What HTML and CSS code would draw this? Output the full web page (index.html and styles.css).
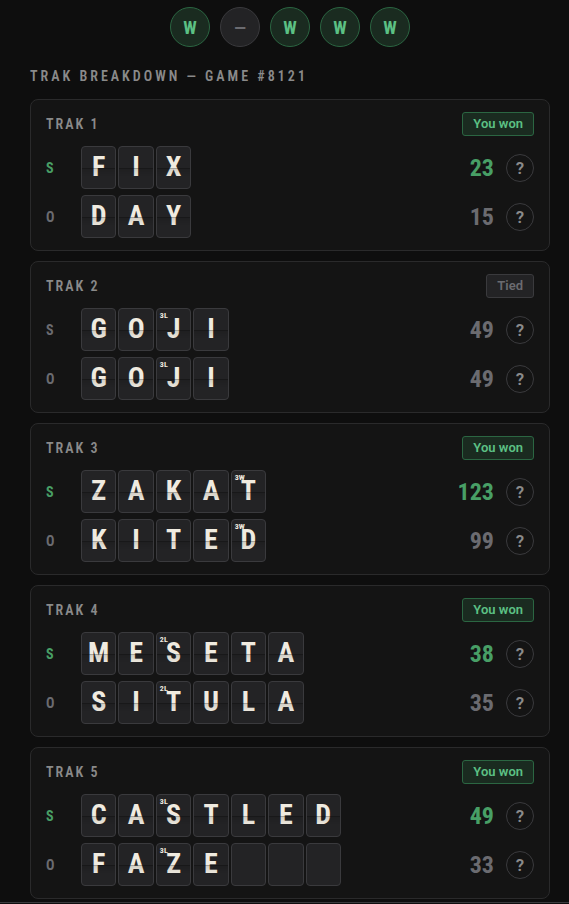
FILE: index.html
```html
<!DOCTYPE html>
<html lang="en">
<head>
  <meta charset="UTF-8">
  <meta name="viewport" content="width=device-width, initial-scale=1.0">
  <title>Trak Breakdown</title>
  <link rel="stylesheet" href="styles.css">
</head>
<body>
  <main class="container">
    <div class="results">
      <span class="result win">W</span>
      <span class="result">—</span>
      <span class="result win">W</span>
      <span class="result win">W</span>
      <span class="result win">W</span>
    </div>
    <h2 class="title">TRAK BREAKDOWN — GAME #8121</h2>
    <div class="traks" id="traks"></div>
  </main>
  <footer class="bottom-bar"></footer>
  <script src="script.js"></script>
</body>
</html>
```

FILE: styles.css
```css
*{
  box-sizing: border-box;
}
body{
  margin: 0;
  height: 100vh;
  overflow: hidden;
  display: flex;
  flex-direction: column;
  background-color: #0e0e0e;
  color: #8a8a8a;
  font-family: "Roboto Condensed", "Liberation Sans Narrow", Roboto, sans-serif;
}
.container{
  flex: 1;
  min-height: 0;
  overflow: hidden;
  padding: 7px 19px 0 30px;
}
.results{
  display: flex;
  justify-content: center;
  gap: 10px;
}
.result{
  display: flex;
  align-items: center;
  justify-content: center;
  width: 40px;
  height: 40px;
  border: 1px solid #3a3a3d;
  border-radius: 50%;
  background-color: #232325;
  color: #6b6b70;
  font-size: 18px;
  font-weight: 700;
}
.result.win{
  border-color: #2b6642;
  background-color: #1a2b20;
  color: #5cc084;
}
.title{
  margin: 20px 0 14px;
  font-size: 14px;
  line-height: 18px;
  font-weight: 600;
  letter-spacing: 3px;
}
.traks{
  display: flex;
  flex-direction: column;
  gap: 10px;
}
.trak{
  padding: 12px 15px;
  border: 1px solid #2a2a2b;
  border-radius: 8px;
  background-color: #141414;
}
.trak-head{
  display: flex;
  align-items: center;
  justify-content: space-between;
  margin-bottom: 10px;
}
.trak-name{
  margin: 0;
  font-size: 14px;
  line-height: 24px;
  font-weight: 600;
  letter-spacing: 2px;
}
.badge{
  padding: 0 10px;
  border: 1px solid #2b6642;
  border-radius: 3px;
  background-color: #1a2b20;
  color: #5cc084;
  font-family: Roboto, "Liberation Sans", sans-serif;
  font-size: 13px;
  line-height: 22px;
  font-weight: 600;
}
.badge.tied{
  border-color: #3a3a3d;
  background-color: #232325;
  color: #6b6b70;
}
.row{
  display: flex;
  align-items: center;
  color: #6b6b70;
}
.row + .row{
  margin-top: 6px;
}
.player{
  width: 35px;
  font-size: 14px;
  font-weight: 700;
}
.tiles{
  display: grid;
  grid-template-columns: repeat(7, 1fr);
  gap: 2px;
  width: 260px;
}
.tile{
  position: relative;
  height: 43px;
  border: 1px solid #3a3a3d;
  border-radius: 4px;
  background-color: #232325;
  color: #f0ebe0;
  font-size: 28px;
  line-height: 40px;
  font-weight: 700;
  text-align: center;
}
/* split-flap seam */
.tile.filled::after{
  content: "";
  position: absolute;
  left: 0;
  right: 0;
  top: 50%;
  height: 8px;
  border-top: 1px solid rgba(0, 0, 0, 0.3);
  background: linear-gradient(rgba(0, 0, 0, 0.12), rgba(0, 0, 0, 0));
}
.bonus{
  position: absolute;
  left: 3px;
  top: 3px;
  font-size: 8px;
  line-height: 8px;
}
.score{
  margin-left: auto;
  font-size: 24px;
  line-height: 28px;
  font-weight: 700;
}
.row.winner .player,
.row.winner .score{
  color: #489f66;
}
.help{
  width: 28px;
  height: 28px;
  margin-left: 12px;
  padding: 0;
  border: 1px solid #3a3a3d;
  border-radius: 50%;
  background: none;
  color: #8a8a8a;
  font-family: Roboto, "Liberation Sans", sans-serif;
  font-size: 17px;
  font-weight: 600;
  cursor: pointer;
}
.bottom-bar{
  height: 2px;
  border-top: 1px solid #3a3a3d;
}
```

FILE: script.js
```js
let traks = [
  { result: 'You won', rows: [['S', 'FIX', 23], ['O', 'DAY', 15]] },
  { result: 'Tied', bonus: '3L', at: 2, rows: [['S', 'GOJI', 49], ['O', 'GOJI', 49]] },
  { result: 'You won', bonus: '3W', at: 4, rows: [['S', 'ZAKAT', 123], ['O', 'KITED', 99]] },
  { result: 'You won', bonus: '2L', at: 2, rows: [['S', 'MESETA', 38], ['O', 'SITULA', 35]] },
  { result: 'You won', bonus: '3L', at: 2, rows: [['S', 'CASTLED', 49], ['O', 'FAZE', 33]] }
];

// one row of tiles, padded with empty ones up to the longer word
function renderTiles(word, length, trak){
  let html = '';
  for(let i = 0; i < length; i++){
    if(i >= word.length){
      html += '<span class="tile"></span>';
      continue;
    }
    let bonus = trak.at === i ? `<span class="bonus">${trak.bonus}</span>` : '';
    html += `<span class="tile filled">${bonus}${word[i]}</span>`;
  }
  return html;
}

function renderTrak(trak, index){
  let length = Math.max(...trak.rows.map(row => row[1].length));
  let best = Math.max(...trak.rows.map(row => row[2]));
  let tied = trak.result === 'Tied';
  let rows = trak.rows.map(([player, word, score]) => `
    <div class="row ${!tied && score === best ? 'winner' : ''}">
      <span class="player">${player}</span>
      <div class="tiles">${renderTiles(word, length, trak)}</div>
      <span class="score">${score}</span>
      <button class="help" type="button">?</button>
    </div>`).join('');
  return `
    <section class="trak">
      <div class="trak-head">
        <h3 class="trak-name">TRAK ${index + 1}</h3>
        <span class="badge ${tied ? 'tied' : ''}">${trak.result}</span>
      </div>
      ${rows}
    </section>`;
}

document.getElementById('traks').innerHTML = traks.map(renderTrak).join('');
```
